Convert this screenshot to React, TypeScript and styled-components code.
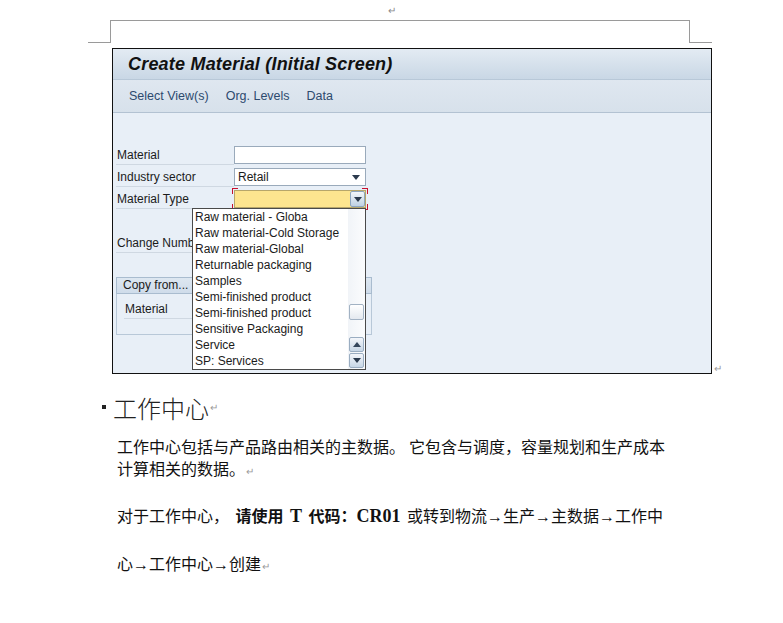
import React from "react";
import styled, { createGlobalStyle } from "styled-components";

const GlobalStyle = createGlobalStyle`
  html, body {
    margin: 0;
    padding: 0;
    background: #fff;
  }
  body {
    font-family: "Liberation Sans", Arial, sans-serif;
  }
`;

const Page = styled.div`
  width: 783px;
  height: 623px;
  overflow: hidden;
`;

const TopMark = styled.div`
  height: 20px;
  padding-left: 388px;
  box-sizing: border-box;
  font-size: 10px;
  line-height: 22px;
  color: #8a8a8a;
`;

const HeaderRule = styled.div`
  display: flex;
  height: 23px;
  margin-left: 88px;
`;

const Wing = styled.div`
  width: 22px;
  border-bottom: 1px solid #9a9a9a;
  box-sizing: border-box;
`;

const HeaderBox = styled.div`
  width: 580px;
  border: 1px solid #9a9a9a;
  border-bottom: none;
  box-sizing: border-box;
`;

const FrameRow = styled.div`
  display: flex;
  align-items: flex-end;
  margin: 5px 0 0 112px;
`;

const PilcrowMark = styled.span`
  font-size: 10px;
  line-height: 10px;
  color: #9a9a9a;
  margin-left: 2px;
`;

const SapFrame = styled.div`
  width: 600px;
  height: 326px;
  border: 1px solid #111;
  box-sizing: border-box;
  background: #e8eff7;
  display: flex;
  flex-direction: column;
  font-family: "Liberation Sans", Tahoma, sans-serif;
  font-size: 12px;
  color: #1b1b1b;
  overflow: hidden;
`;

const TitleBar = styled.div`
  height: 31px;
  flex-shrink: 0;
  box-sizing: border-box;
  padding-left: 15px;
  display: flex;
  align-items: center;
  background: linear-gradient(#e3ebf3, #c9d7e5);
  border-bottom: 1px solid #b8c8d8;
  font-size: 18px;
  letter-spacing: 0.2px;
  font-weight: bold;
  font-style: italic;
  color: #111;
`;

const Toolbar = styled.div`
  height: 33px;
  flex-shrink: 0;
  box-sizing: border-box;
  padding-left: 16px;
  display: flex;
  align-items: center;
  gap: 17px;
  background: linear-gradient(#dfe7f0, #d7e1eb);
  border-bottom: 1px solid #b3c2d2;
  color: #2d4a6e;
  font-size: 12.5px;
`;

const Body = styled.div`
  flex: 1;
  position: relative;
  padding: 33px 0 0 3px;
`;

const Row = styled.div`
  display: flex;
  align-items: flex-start;
  height: 22px;
`;

const Label = styled.div<{ $width?: number }>`
  width: ${(p) => p.$width ?? 118}px;
  height: 19px;
  line-height: 18px;
  padding-left: 1px;
  box-sizing: border-box;
  border-bottom: 1px solid #cfd8e2;
  white-space: nowrap;
  overflow: hidden;
`;

const Field = styled.div<{ $required?: boolean }>`
  position: relative;
  width: 132px;
  height: 18px;
  box-sizing: border-box;
  border: 1px solid ${(p) => (p.$required ? "#b7a66a" : "#9aaabb")};
  background: ${(p) => (p.$required ? "#fde58f" : "#fff")};
  display: flex;
  align-items: center;
  padding-left: 3px;

  ${(p) =>
    p.$required &&
    `
    &::before {
      content: "";
      position: absolute;
      inset: -3px;
      pointer-events: none;
      background:
        linear-gradient(#c8102e, #c8102e) top left / 6px 1px no-repeat,
        linear-gradient(#c8102e, #c8102e) top left / 1px 6px no-repeat,
        linear-gradient(#c8102e, #c8102e) top right / 6px 1px no-repeat,
        linear-gradient(#c8102e, #c8102e) top right / 1px 6px no-repeat,
        linear-gradient(#c8102e, #c8102e) bottom left / 6px 1px no-repeat,
        linear-gradient(#c8102e, #c8102e) bottom left / 1px 6px no-repeat,
        linear-gradient(#c8102e, #c8102e) bottom right / 6px 1px no-repeat,
        linear-gradient(#c8102e, #c8102e) bottom right / 1px 6px no-repeat;
    }
  `}
`;

const Caret = styled.span<{ $up?: boolean }>`
  width: 0;
  height: 0;
  border-left: 4px solid transparent;
  border-right: 4px solid transparent;
  ${(p) =>
    p.$up
      ? "border-bottom: 5px solid #34465b;"
      : "border-top: 5px solid #2b3a4d;"}
`;

const PlainArrow = styled.span`
  margin-left: auto;
  margin-right: 5px;
  display: flex;
`;

const DropButton = styled.span`
  margin-left: auto;
  width: 15px;
  height: 16px;
  box-sizing: border-box;
  border: 1px solid #8ea6bf;
  border-radius: 2px;
  background: linear-gradient(#f2f6fa, #bfd1e3);
  display: flex;
  align-items: center;
  justify-content: center;
`;

const Spacer = styled.div<{ $h: number }>`
  height: ${(p) => p.$h}px;
`;

const GroupBox = styled.div`
  width: 256px;
  margin-top: 21px;
`;

const GroupHeader = styled.div`
  height: 17px;
  box-sizing: border-box;
  border: 1px solid #a9bccf;
  background: linear-gradient(#dde7f1, #cfdcea);
  padding-left: 6px;
  line-height: 15px;
`;

const GroupContent = styled.div`
  height: 41px;
  box-sizing: border-box;
  border: 1px solid #b8c8d8;
  border-top: none;
  padding: 6px 0 0 7px;
`;

const Dropdown = styled.div`
  position: absolute;
  left: 79px;
  top: 95px;
  width: 174px;
  height: 162px;
  box-sizing: border-box;
  border: 1px solid #4a4a4a;
  background: #fff;
  display: flex;
`;

const OptionList = styled.div`
  flex: 1;
  padding-left: 2px;
  overflow: hidden;
`;

const Option = styled.div`
  height: 16px;
  line-height: 16px;
  white-space: nowrap;
`;

const Scrollbar = styled.div`
  width: 17px;
  display: flex;
  flex-direction: column;
  align-items: center;
  gap: 1px;
  padding-bottom: 1px;
  box-sizing: border-box;
  background: linear-gradient(90deg, #f1f4f8, #fbfcfd);
`;

const Thumb = styled.div`
  margin-top: 95px;
  width: 15px;
  height: 16px;
  box-sizing: border-box;
  border: 1px solid #a2b2c3;
  border-radius: 2px;
  background: linear-gradient(#fff, #e4e9ef);
`;

const ScrollButton = styled.div<{ $first?: boolean }>`
  ${(p) => (p.$first ? "margin-top: auto;" : "")}
  width: 15px;
  height: 15px;
  box-sizing: border-box;
  border: 1px solid #9aadc1;
  border-radius: 2px;
  background: linear-gradient(#f3f6fa, #c7d6e6);
  display: flex;
  align-items: center;
  justify-content: center;
`;

const Heading = styled.div`
  display: flex;
  align-items: center;
  height: 34px;
  margin: 16px 0 0 102px;
`;

const Bullet = styled.span`
  width: 4px;
  height: 4px;
  background: #222;
  margin-right: 7px;
`;

const HeadingText = styled.span`
  font-family: "Noto Sans CJK SC", sans-serif;
  font-size: 24px;
  font-weight: 300;
  color: #222;
`;

const Text = styled.div`
  margin-left: 117px;
  font-family: "Liberation Serif", "Noto Sans CJK SC", serif;
  font-size: 16px;
  color: #111;
`;

const Line = styled.div<{ $h: number; $gap?: number; $spaced?: boolean }>`
  height: ${(p) => p.$h}px;
  line-height: ${(p) => p.$h}px;
  margin-top: ${(p) => p.$gap ?? 0}px;
  white-space: nowrap;
  word-spacing: ${(p) => (p.$spaced ? "2.5px" : "normal")};
`;

const Strong = styled.b`
  font-weight: bold;
`;

const LatinStrong = styled.span`
  font-size: 18px;
`;

const SmallMark = styled.span`
  font-size: 10px;
  color: #9a9a9a;
  margin-left: 1px;
`;

const materialTypes = [
  "Raw material - Globa",
  "Raw material-Cold Storage",
  "Raw material-Global",
  "Returnable packaging",
  "Samples",
  "Semi-finished product",
  "Semi-finished product",
  "Sensitive Packaging",
  "Service",
  "SP: Services",
];

export default function App() {
  return (
    <>
      <GlobalStyle />
      <Page>
        <TopMark>↵</TopMark>
        <HeaderRule>
          <Wing />
          <HeaderBox />
          <Wing />
        </HeaderRule>

        <FrameRow>
          <SapFrame>
            <TitleBar>Create Material (Initial Screen)</TitleBar>
            <Toolbar>
              <span>Select View(s)</span>
              <span>Org. Levels</span>
              <span>Data</span>
            </Toolbar>
            <Body>
              <Row>
                <Label>Material</Label>
                <Field />
              </Row>
              <Row>
                <Label>Industry sector</Label>
                <Field>
                  Retail
                  <PlainArrow>
                    <Caret />
                  </PlainArrow>
                </Field>
              </Row>
              <Row>
                <Label>Material Type</Label>
                <Field $required>
                  <DropButton>
                    <Caret />
                  </DropButton>
                </Field>
              </Row>
              <Spacer $h={22} />
              <Row>
                <Label>Change Number</Label>
                <Field />
              </Row>

              <GroupBox>
                <GroupHeader>Copy from...</GroupHeader>
                <GroupContent>
                  <Label $width={110}>Material</Label>
                </GroupContent>
              </GroupBox>

              <Dropdown>
                <OptionList>
                  {materialTypes.map((t, i) => (
                    <Option key={i}>{t}</Option>
                  ))}
                </OptionList>
                <Scrollbar>
                  <Thumb />
                  <ScrollButton $first>
                    <Caret $up />
                  </ScrollButton>
                  <ScrollButton>
                    <Caret />
                  </ScrollButton>
                </Scrollbar>
              </Dropdown>
            </Body>
          </SapFrame>
          <PilcrowMark>↵</PilcrowMark>
        </FrameRow>

        <Heading>
          <Bullet />
          <HeadingText>工作中心</HeadingText>
          <SmallMark>↵</SmallMark>
        </Heading>

        <Text>
          <Line $h={22} $gap={13}>
            工作中心包括与产品路由相关的主数据。 它包含与调度，容量规划和生产成本
          </Line>
          <Line $h={22}>
            计算相关的数据。<SmallMark>↵</SmallMark>
          </Line>
          <Line $h={26} $gap={22} $spaced>
            对于工作中心， <Strong>请使用 <LatinStrong>T</LatinStrong> 代码：<LatinStrong>CR01</LatinStrong></Strong> 或转到物流→生产→主数据→工作中
          </Line>
          <Line $h={26} $gap={23}>
            心→工作中心→创建<SmallMark>↵</SmallMark>
          </Line>
        </Text>
      </Page>
    </>
  );
}
